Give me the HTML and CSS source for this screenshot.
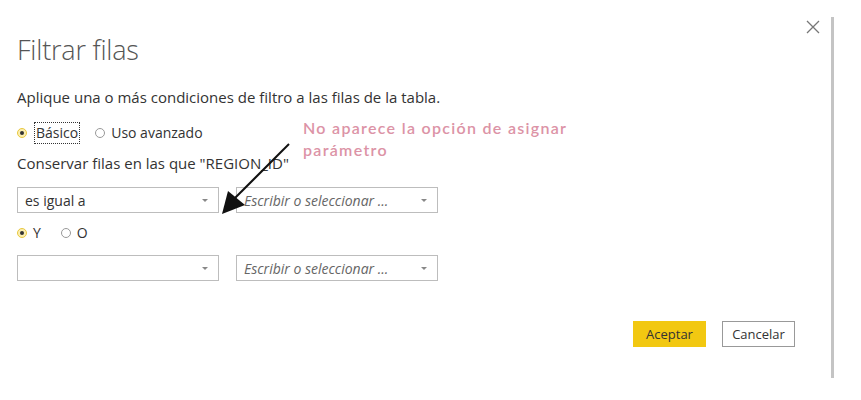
FILE: index.html
```html
<!DOCTYPE html>
<html lang="es">
<head>
<meta charset="utf-8">
<link rel="stylesheet" href="styles.css">
</head>
<body>
<div class="page">
  <div class="dialog">
    <h1 class="title">Filtrar filas</h1>
    <p class="desc">Aplique una o más condiciones de filtro a las filas de la tabla.</p>
    <div class="radios mode">
      <label class="radio"><span class="dot on"></span><span class="focus">Básico</span></label>
      <label class="radio"><span class="dot"></span><span>Uso avanzado</span></label>
    </div>
    <p class="keep">Conservar filas en las que "REGION_ID"</p>
    <div class="row first">
      <div class="select"><span class="val">es igual a</span><span class="caret"></span></div>
      <div class="select"><span class="val ph">Escribir o seleccionar ...</span><span class="caret"></span></div>
    </div>
    <div class="radios join">
      <label class="radio"><span class="dot on"></span><span>Y</span></label>
      <label class="radio"><span class="dot"></span><span>O</span></label>
    </div>
    <div class="row second">
      <div class="select"><span class="val"></span><span class="caret"></span></div>
      <div class="select"><span class="val ph">Escribir o seleccionar ...</span><span class="caret"></span></div>
    </div>
    <div class="actions">
      <button class="btn primary">Aceptar</button>
      <button class="btn">Cancelar</button>
    </div>
  </div>
  <div class="side">
    <svg class="close" width="14" height="14" viewBox="0 0 14 14"><path d="M1 1L13 13M13 1L1 13" stroke="#777" stroke-width="1.3" fill="none"/></svg>
  </div>
  <div class="edge"></div>
  <p class="note">No aparece la opción de asignar<br>parámetro</p>
  <svg class="arrow" width="80" height="80" viewBox="0 0 80 80">
    <path d="M69 3L14 58" stroke="#111" stroke-width="2" fill="none"/>
    <path d="M2 73L8 50L25 64Z" fill="#111"/>
  </svg>
</div>
</body>
</html>
```
FILE: styles.css
```css
html, body { margin: 0; padding: 0; background: #fff; }
body { font-family: "Open Sans", "Liberation Sans", sans-serif; color: #333; }
.page { position: relative; width: 861px; height: 400px; display: flex; }
.dialog { width: 795px; padding: 0 0 0 17px; box-sizing: content-box; }
.title { margin: 0; padding-top: 32px; font-weight: 300; font-size: 27px; line-height: 35px; color: #555; letter-spacing: -0.2px; }
.desc { margin: 20px 0 0; font-size: 15px; line-height: 20px; color: #333; }
.radios { display: flex; align-items: center; font-size: 14px; line-height: 20px; }
.mode { margin-top: 16px; gap: 16px; }
.join { margin-top: 10px; gap: 20px; }
.radio { display: flex; align-items: center; gap: 6px; }
.mode .radio:first-child { gap: 8px; }
.dot { width: 8px; height: 8px; border: 1px solid #999; border-radius: 50%; display: inline-flex; align-items: center; justify-content: center; box-sizing: content-box; }
.dot.on { border-color: #e8c840; background: #fbeeb0; }
.dot.on::after { content: ""; width: 4px; height: 4px; border-radius: 50%; background: #333; }
.focus { outline: 1px dotted #333; padding: 0 1px; }
.keep { margin: 10px 0 0; font-size: 15px; line-height: 20px; }
.row { display: flex; gap: 17px; }
.row.first { margin-top: 14px; }
.row.second { margin-top: 12px; }
.select { width: 202px; height: 26px; border: 1px solid #bdbdbd; box-sizing: border-box; display: flex; align-items: center; justify-content: space-between; padding: 0 10px 0 7px; font-size: 14px; }
.ph { font-style: italic; color: #666; }
.caret { width: 0; height: 0; border-left: 3px solid transparent; border-right: 3px solid transparent; border-top: 3px solid #888; }
.actions { display: flex; justify-content: flex-end; gap: 16px; margin-top: 40px; padding-right: 17px; }
.btn { font-family: inherit; font-size: 13px; height: 26px; width: 73px; border: 1px solid #999; background: #fff; color: #333; padding: 0; }
.btn.primary { background: #f2c811; border-color: #f2c811; }
.side { width: 20px; }
.close { margin-top: 20px; margin-left: -6px; }
.edge { position: absolute; left: 831px; top: 17px; width: 3px; height: 361px; background: #c4c4c4; }
.note { position: absolute; left: 303px; top: 117px; margin: 0; font-family: Lato, "Open Sans", sans-serif; font-weight: 600; font-size: 16px; line-height: 22px; letter-spacing: 1.3px; color: #dc93a6; }
.arrow { position: absolute; left: 220px; top: 141px; }
```
